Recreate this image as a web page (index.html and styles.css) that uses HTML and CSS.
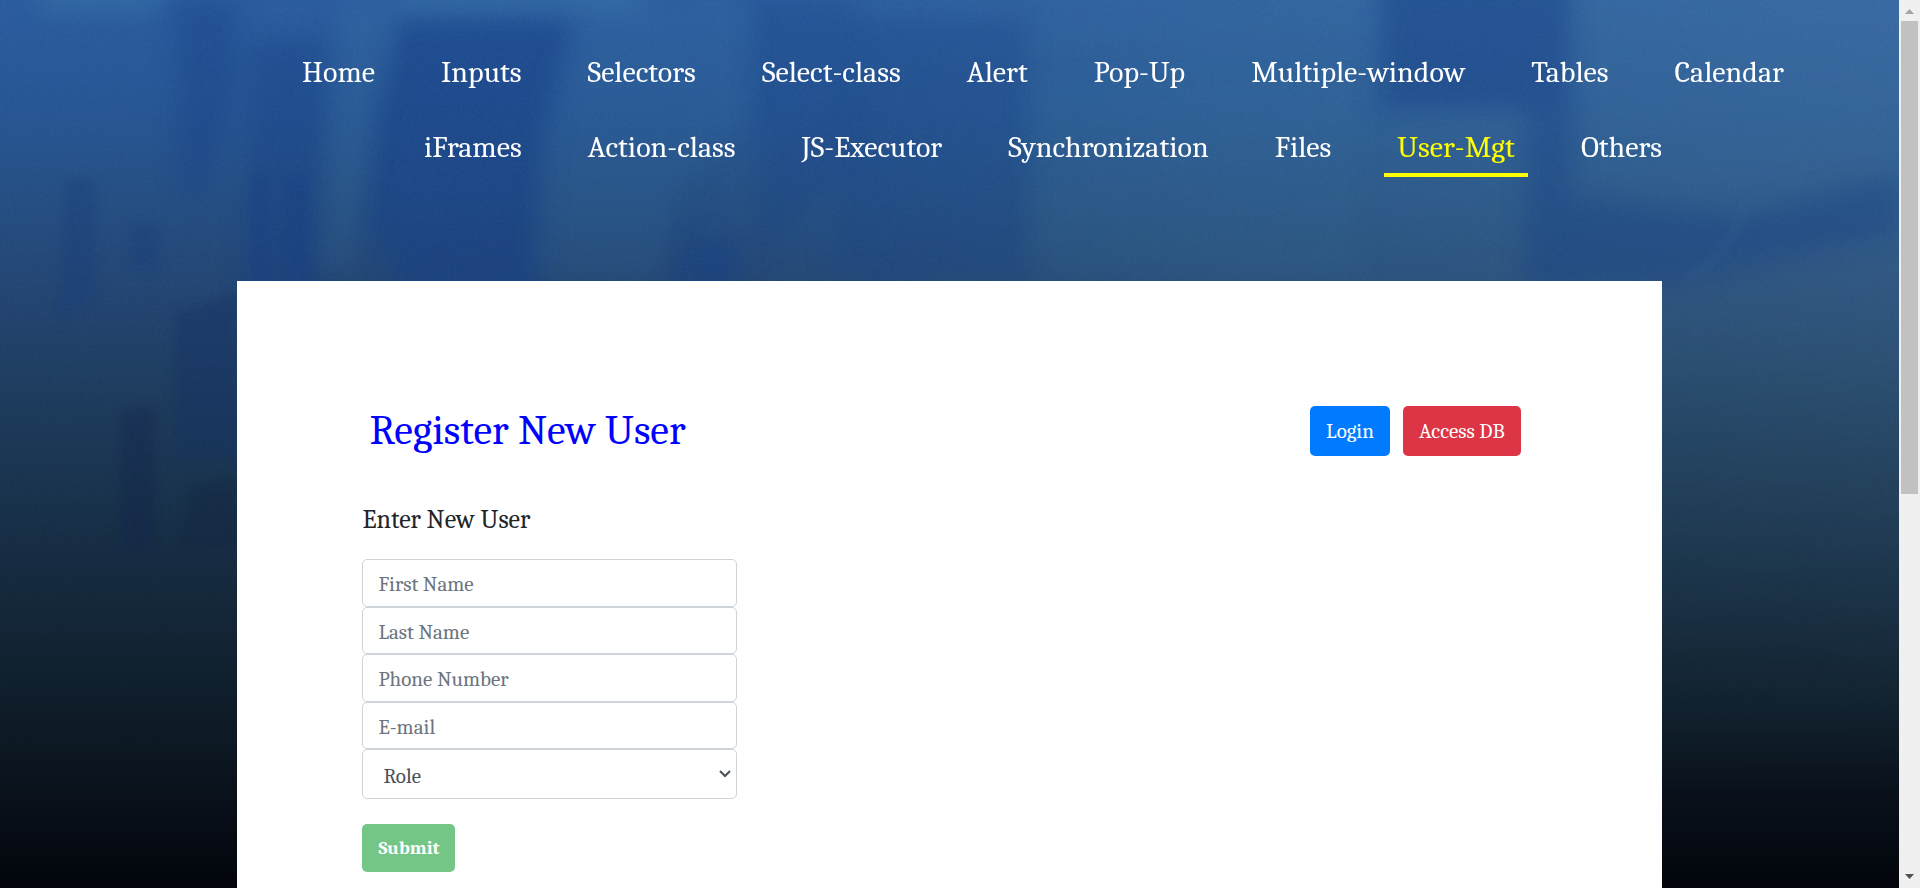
FILE: index.html
```html
<!DOCTYPE html>
<html lang="en">
<head>
<meta charset="utf-8">
<title>User-Mgt</title>
<link rel="stylesheet" href="styles.css">
</head>
<body>
<div class="page">
  <svg class="backdrop" viewBox="0 0 1899 888" preserveAspectRatio="none" aria-hidden="true">
    <defs>
      <linearGradient id="base" x1="0" y1="0" x2="0" y2="1">
        <stop offset="0" stop-color="#295b9f"/>
        <stop offset=".12" stop-color="#255594"/>
        <stop offset=".22" stop-color="#234e84"/>
        <stop offset=".34" stop-color="#214370"/>
        <stop offset=".44" stop-color="#1c3b5e"/>
        <stop offset=".55" stop-color="#18324d"/>
        <stop offset=".68" stop-color="#14273a"/>
        <stop offset=".8" stop-color="#0f1d29"/>
        <stop offset=".92" stop-color="#080e17"/>
        <stop offset="1" stop-color="#02050b"/>
      </linearGradient>
      <linearGradient id="side" x1="0" y1="0" x2="1" y2="0">
        <stop offset=".35" stop-color="#4f8aa4" stop-opacity="0"/>
        <stop offset=".65" stop-color="#4f8aa4" stop-opacity=".2"/>
        <stop offset="1" stop-color="#5c90ac" stop-opacity=".28"/>
      </linearGradient>
      <linearGradient id="fade" x1="0" y1="0" x2="0" y2="1">
        <stop offset="0" stop-color="#fff"/>
        <stop offset=".4" stop-color="#ccc"/>
        <stop offset=".9" stop-color="#000"/>
      </linearGradient>
      <mask id="down"><rect width="1899" height="888" fill="url(#fade)"/></mask>
      <filter id="soft" x="-30%" y="-30%" width="160%" height="160%" color-interpolation-filters="sRGB"><feGaussianBlur stdDeviation="12"/></filter>
      <filter id="fine" x="-30%" y="-30%" width="160%" height="160%" color-interpolation-filters="sRGB"><feGaussianBlur stdDeviation="5"/></filter>
      <filter id="grain" x="0" y="0" width="100%" height="100%">
        <feTurbulence type="fractalNoise" baseFrequency=".35" numOctaves="2"/>
        <feColorMatrix type="saturate" values="0"/>
      </filter>
    </defs>
    <rect width="1899" height="888" fill="url(#base)"/>
    <rect width="1899" height="888" fill="url(#side)" mask="url(#down)"/>
    <g filter="url(#soft)" fill="#143f86" opacity=".5">
      <path d="M175 0h62v90l-35 110-22-10z" opacity=".8"/>
      <path d="M250 40h75l-5 260h-75z" opacity=".8"/>
      <path d="M400 20h175l-30 130-5 150H405l-40-80 10-110z"/>
      <path d="M752 0h105v170l-95 80z" opacity=".6"/>
      <path d="M850 20h177v260H830z" opacity=".6"/>
      <path d="M1380 -20h190v130h-190z"/>
      <path d="M1525 100h48v190h-48z" opacity=".8"/>
      <path d="M1573 195l170 20 156-40v60l-240 50h-90z" opacity=".8"/>
      <path d="M690 240h50v45h-65z"/>
    </g>
    <g filter="url(#fine)">
      <path d="M65 180h30v115l-35 30z" fill="#163b7a" opacity=".4"/>
      <path d="M130 225h28v45h-28z" fill="#163b7a" opacity=".4"/>
      <path d="M251 175h16v108h-16z" fill="#173f82" opacity=".5"/>
      <path d="M283 175h24v105h-24z" fill="#173f82" opacity=".4"/>
      <path d="M175 313l62-20v165h-62z" fill="#143063" opacity=".45"/>
      <path d="M120 412l34-8v145h-34z" fill="#11234a" opacity=".35"/>
      <path d="M190 485l47-8v70h-55z" fill="#10213f" opacity=".35"/>
    </g>
    <g filter="url(#soft)" fill="#478cae">
      <path d="M340 0h60l-20 110-30 160h-30z" opacity=".12"/>
      <path d="M575 0h175v110l-70 80-20 90H530l10-150z" opacity=".1"/>
      <path d="M1030 80h330v200h-330z" opacity=".06"/>
      <path d="M40 -20h120v30H40z" opacity=".3"/>
      <path d="M400 -20h240v30H400z" opacity=".3"/>
    </g>
    <path d="M1745 205q-15 50-60 75" fill="none" stroke="#4d86a5" stroke-width="3" opacity=".25" filter="url(#fine)"/>
    <rect width="1899" height="888" filter="url(#grain)" opacity=".05" mask="url(#down)"/>
  </svg>

  <nav class="nav" aria-label="Main">
    <a href="#">Home</a>
    <a href="#">Inputs</a>
    <a href="#">Selectors</a>
    <a href="#">Select-class</a>
    <a href="#">Alert</a>
    <a href="#">Pop-Up</a>
    <a href="#">Multiple-window</a>
    <a href="#">Tables</a>
    <a href="#">Calendar</a>
    <a href="#">iFrames</a>
    <a href="#">Action-class</a>
    <a href="#">JS-Executor</a>
    <a href="#">Synchronization</a>
    <a href="#">Files</a>
    <a href="#" class="active" aria-current="page">User-Mgt</a>
    <a href="#">Others</a>
  </nav>

  <main class="panel">
    <header class="panel-head">
      <h1>Register New User</h1>
      <div class="actions">
        <button type="button" class="btn btn-primary">Login</button>
        <button type="button" class="btn btn-danger">Access DB</button>
      </div>
    </header>
    <h2>Enter New User</h2>
    <form>
      <div class="fields">
        <input type="text" placeholder="First Name" aria-label="First Name">
        <input type="text" placeholder="Last Name" aria-label="Last Name">
        <input type="tel" placeholder="Phone Number" aria-label="Phone Number">
        <input type="email" placeholder="E-mail" aria-label="E-mail">
        <div class="select">
          <select aria-label="Role"><option>Role</option></select>
          <svg viewBox="0 0 12 8" aria-hidden="true"><path d="M1 1l5 5 5-5" fill="none" stroke="#495057" stroke-width="2"/></svg>
        </div>
      </div>
      <button type="submit" class="btn btn-success" disabled>Submit</button>
    </form>
  </main>
</div>
<div class="scrollbar" aria-hidden="true">
  <svg class="arrow up" viewBox="0 0 9 5"><path d="M0 5L4.500 0 9 5z"/></svg>
  <div class="thumb"></div>
  <svg class="arrow down" viewBox="0 0 9 5"><path d="M0 0h9L4.500 5z"/></svg>
</div>
</body>
</html>
```
FILE: styles.css
```css
* { box-sizing: border-box; }

body {
  margin: 0;
  height: 100vh;
  display: flex;
  overflow: hidden;
  font-family: Cambria, Caladea, "Liberation Serif", serif;
  color: #212529;
}

.page {
  flex: 1;
  min-width: 0;
  position: relative;
  overflow: hidden;
  background: #02050b;
}

.backdrop {
  position: absolute;
  inset: 0;
  width: 100%;
  height: 100%;
}

.nav {
  position: relative;
  display: flex;
  flex-wrap: wrap;
  justify-content: center;
  gap: 15px 40px;
  padding: 42px 60px 104px 247px;
}

.nav a {
  padding: 14px 13px 8px;
  border-bottom: 4px solid transparent;
  font-size: 30px;
  line-height: 34px;
  color: #fff;
  text-decoration: none;
  white-space: nowrap;
}

.nav a.active {
  color: #ff0;
  border-color: #ff0;
}

.panel {
  position: relative;
  width: 75%;
  min-height: 100vh;
  margin: 0 auto;
  padding: 125px;
  background: #fff;
}

.panel-head {
  display: flex;
  align-items: center;
  justify-content: space-between;
  padding: 0 16px 0 7px;
}

h1 {
  margin: 0;
  font-size: 42px;
  line-height: 50px;
  font-weight: 400;
  color: #00f;
}

h2 {
  margin: 49px 0 23px;
  font-size: 26px;
  line-height: 31px;
  font-weight: 400;
}

.actions {
  display: flex;
  gap: 13px;
}

.btn {
  height: 50px;
  padding: 0 16px;
  border: 0;
  border-radius: 5px;
  font: 21px/24px Cambria, Caladea, "Liberation Serif", serif;
  color: #fff;
}

.btn-primary { background: #007bff; }
.btn-danger { background: #dc3545; }

.btn-success {
  height: 48px;
  margin-top: 25px;
  background: #74c686;
  font-size: 19px;
  font-weight: 700;
}

.fields {
  display: grid;
  grid-template-rows: repeat(4, 1fr) 50px;
  width: 375px;
  min-height: 240px;
}

.fields input,
.fields select {
  width: 100%;
  height: 100%;
  min-height: 0;
  margin: 0;
  padding: 3px 15px 0;
  border: 1px solid #ced4da;
  border-radius: 5px;
  background: #fff;
  font: 21px/24px Cambria, Caladea, "Liberation Serif", serif;
  color: #495057;
}

.fields input::placeholder {
  color: #6c757d;
  opacity: 1;
}

.select { position: relative; }

.fields select {
  appearance: none;
  padding-left: 20px;
}

.select svg {
  position: absolute;
  right: 6px;
  top: 21px;
  width: 12px;
  height: 8px;
}

.scrollbar {
  display: flex;
  flex-direction: column;
  width: 21px;
  padding: 9px 2px;
  background: #f0f0f0;
}

.thumb {
  flex: 0 0 auto;
  height: 54.4%;
  margin-top: 7px;
  background: #c1c1c1;
}

.arrow {
  align-self: center;
  width: 9px;
  height: 5px;
  fill: #a3a3a3;
}

.arrow.down {
  margin-top: auto;
  fill: #505050;
}
```
